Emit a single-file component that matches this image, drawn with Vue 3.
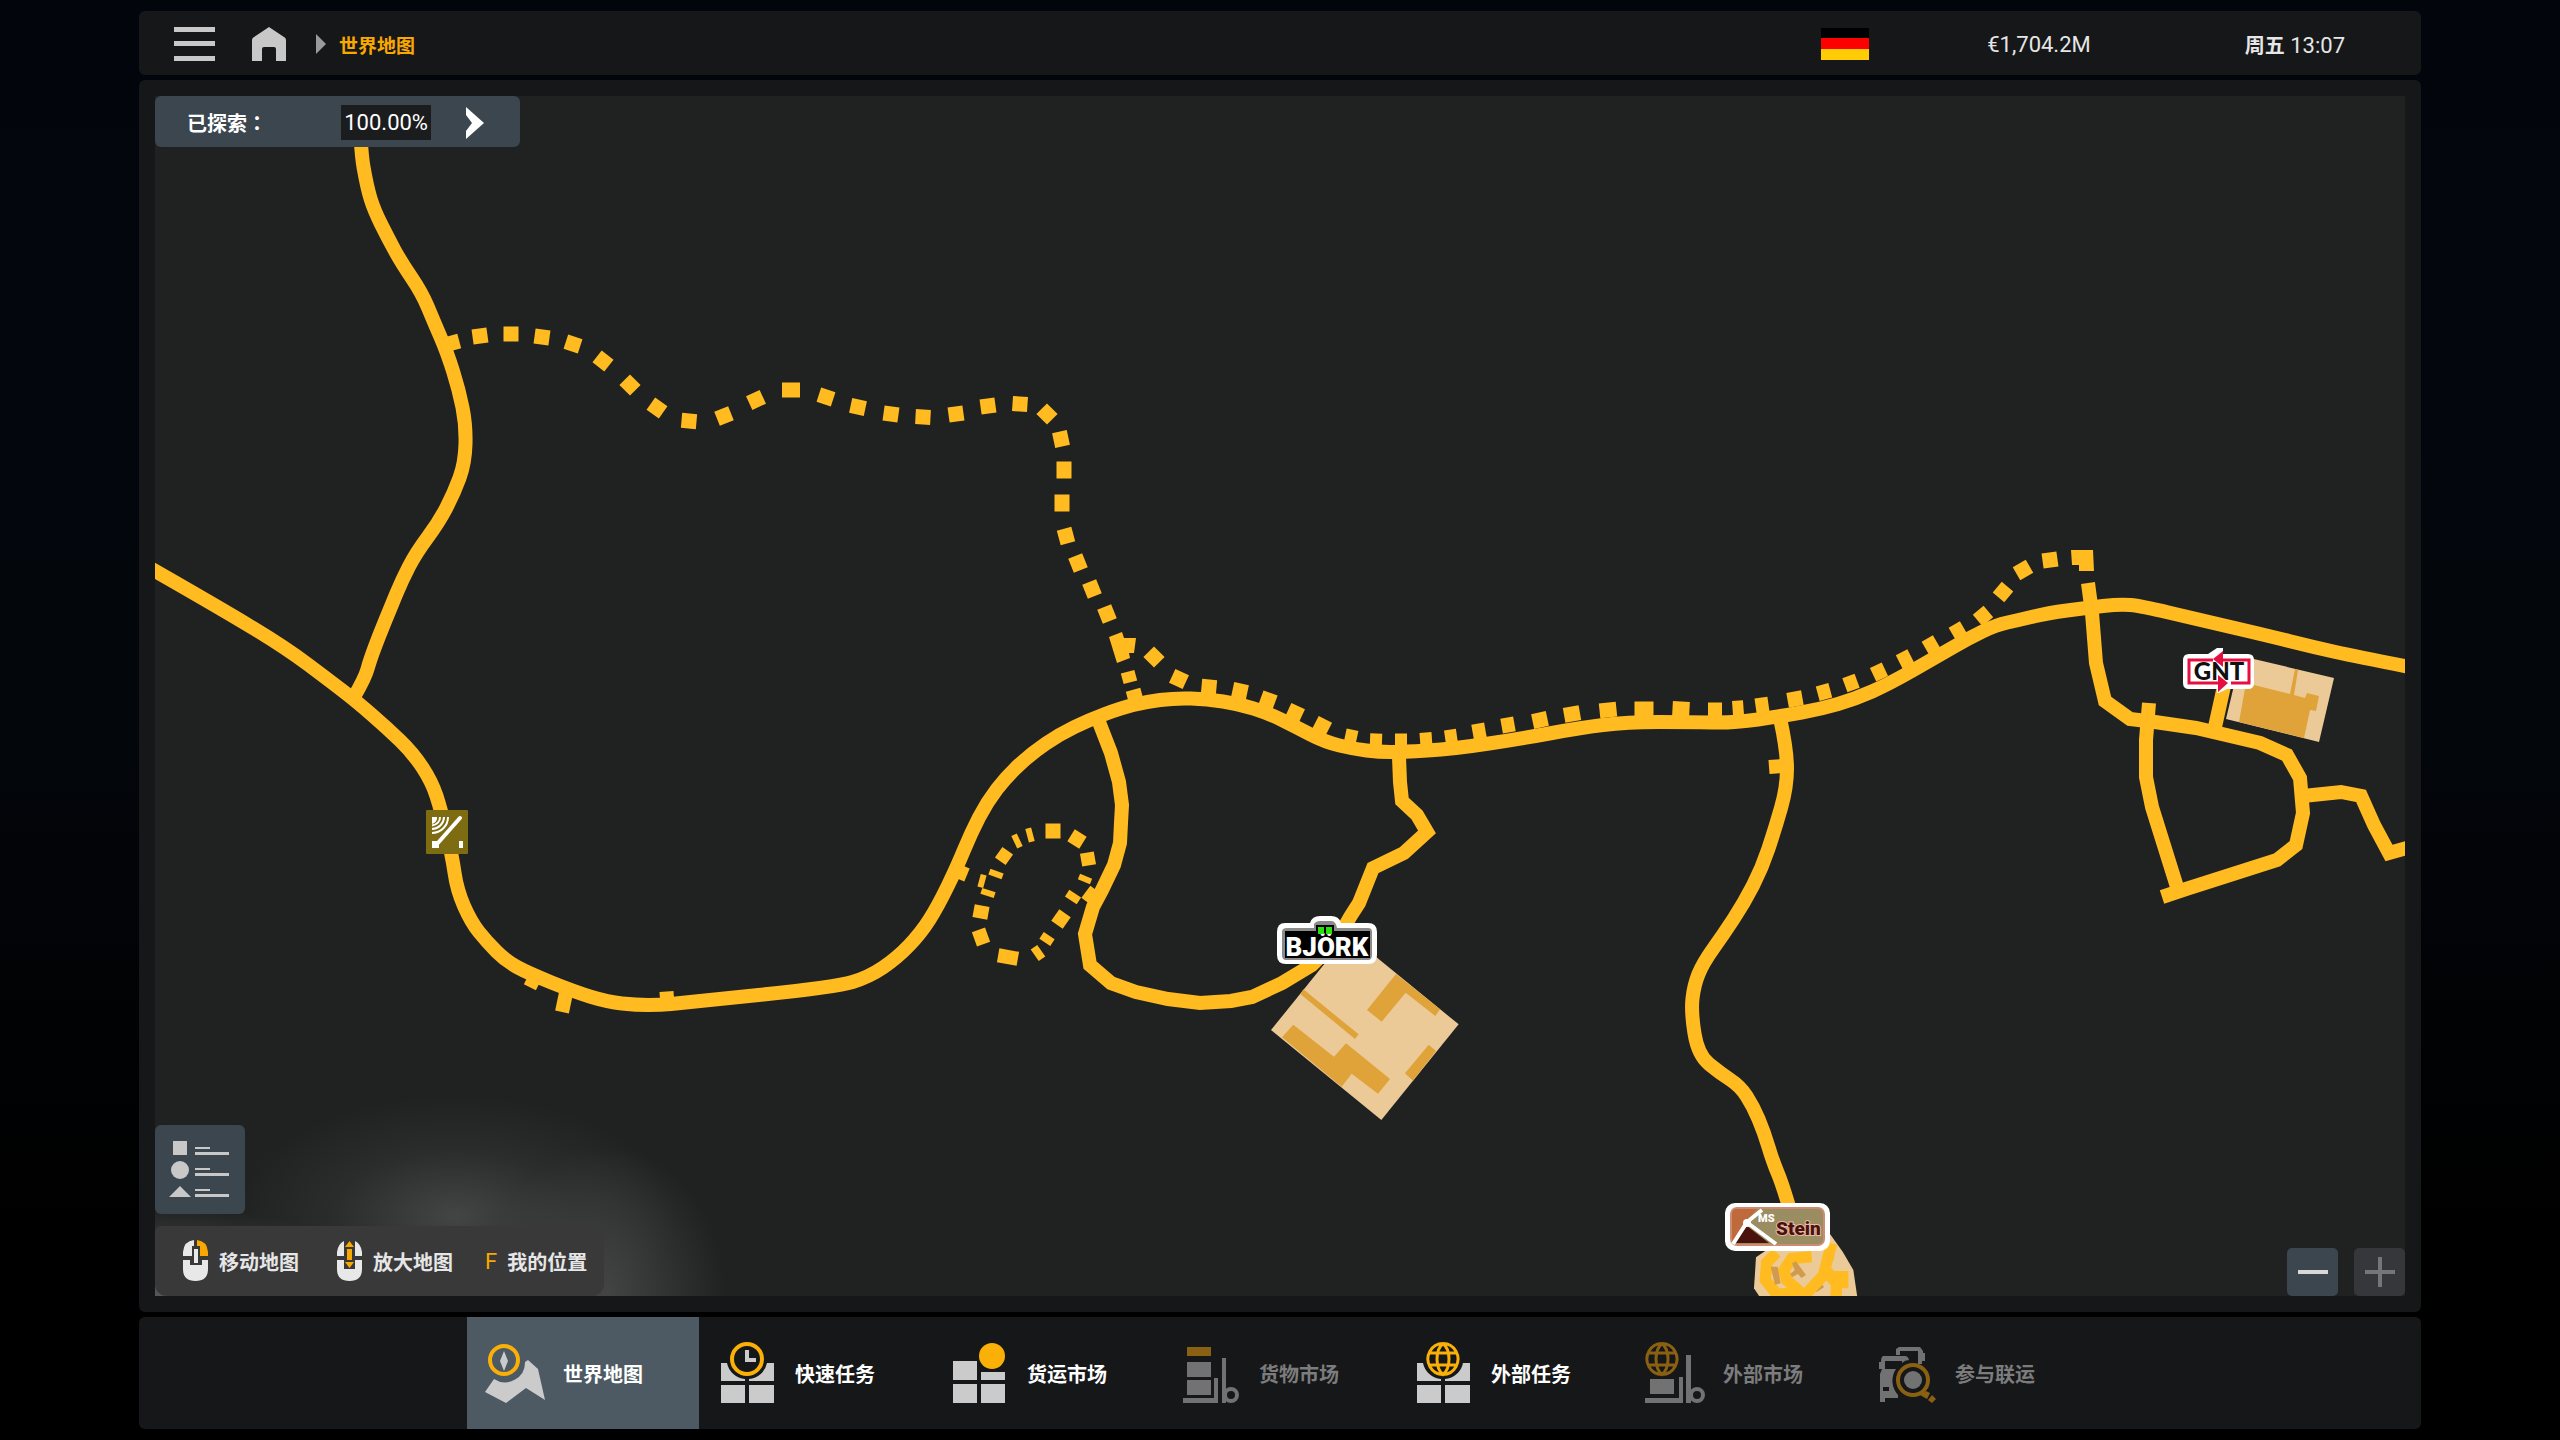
<script setup>
const tabs = [
  { id: 'map', label: '世界地图', active: true },
  { id: 'quick', label: '快速任务' },
  { id: 'freight', label: '货运市场' },
  { id: 'cargo', label: '货物市场', disabled: true },
  { id: 'extjobs', label: '外部任务' },
  { id: 'extmarket', label: '外部市场', disabled: true },
  { id: 'convoy', label: '参与联运', disabled: true },
]

// Rounds a polyline by running quadratic curves between segment midpoints
function smooth(points) {
  const n = points.trim().split(' ').map(Number)
  const p = []
  for (let i = 0; i < n.length; i += 2) p.push([n[i], n[i + 1]])
  let d = `M${p[0][0]} ${p[0][1]}`
  for (let i = 1; i < p.length - 1; i++) {
    const last = i === p.length - 2
    const ex = last ? p[i + 1][0] : (p[i][0] + p[i + 1][0]) / 2
    const ey = last ? p[i + 1][1] : (p[i][1] + p[i + 1][1]) / 2
    d += `Q${p[i][0]} ${p[i][1]} ${ex} ${ey}`
  }
  return d
}

const highways = [
  '359 90 360 147 367 187 374 210 388 238 401 262 422 293 434 322 447 352 459 390 466 425 465 463 454 493 439 522 416 553 402 580 390 609 379 636 370 660 365 678 354 697',
  '150 568 220 608 286 648 330 681 356 701 387 728 413 753 432 782 441 810 452 855 457 890 471 922 487 942 506 961 528 973 575 992 608 1002 636 1005 661 1005 681 1003 836 987 869 977 897 958 921 933 938 906 957 867 971 833 987 802 1007 776 1032 753 1060 734 1089 720 1121 708 1145 702 1175 698 1207 699 1239 704 1268 713 1296 727 1325 742 1354 749 1379 752 1402 752 1453 749 1525 738 1579 728 1627 722 1690 722 1734 723 1782 716 1821 709 1855 699 1889 684 1938 656 1969 638 1996 625 2019 620 2048 613 2086 608 2120 604 2141 606 2196 619 2265 635 2313 647 2358 657 2410 667',
  '1780 718 1787 750 1787 787 1775 829 1762 868 1744 903 1723 935 1703 963 1694 985 1691 1012 1698 1055 1720 1073 1740 1086 1753 1106 1764 1132 1773 1162 1782 1183 1790 1210',
].map(smooth)

const streets = [
  'M1099 722 1111 753 1119 782 1122 805 1121 823 1120 843 1114 865 1102 890 1093 907 1085 934 1090 965 1111 983 1136 992 1168 999 1200 1003 1231 1001 1252 997 1282 983 1312 965 1337 940 1350 917 1359 903 1373 868 1404 853 1427 832 1417 815 1402 801 1400 782 1399 757',
  'M2088 583 2092 613 2096 663 2105 701 2130 719 2155 722 2196 728 2260 743 2287 755 2300 778 2303 813 2296 845 2277 860 2186 889 2162 897',
  'M2149 703 2146 740 2146 777 2152 807 2177 887',
  'M2303 796 2341 792 2361 796 2374 825 2389 853 2410 847',
  'M2215 727 2224 686',
  'M566 993 562 1012',
  'M527 978 539 984',
  'M660 999 674 998',
  'M955 870 967 875',
  'M1087 902 1096 890',
  'M1769 767 1782 766',
]

const roads = [...highways, ...streets]

// Path ties: x, y, rotation, width, height
const ties = [
  [452, 343, -15], [480, 336, -8], [511, 334, 0], [542, 337, 8], [573, 344, 18], [603, 361, 38],
  [630, 385, 45], [657, 408, 35], [689, 421, 5], [724, 416, -22], [756, 400, -25], [791, 390, 0, 18],
  [826, 397, 18], [858, 407, 12], [891, 414, 8], [923, 417, 3], [956, 414, -8], [988, 406, -8],
  [1020, 404, 4], [1047, 414, 45], [1061, 439, -12], [1064, 470, 0, 15, 17], [1062, 503, 0, 15, 17],
  [1066, 536, -15], [1078, 563, -22], [1092, 589, -22], [1107, 614, -22], [1129, 677, -15, 14, 11],
  [1135, 697, -15], [1154, 657, 45], [1179, 679, 25], [1209, 687, 5], [1240, 691, 12], [1268, 700, 20],
  [1295, 713, 25], [1322, 726, 27], [1351, 737, 12, 12], [1376, 741, 2, 12], [1401, 741, 0, 12],
  [1426, 740, -4, 12], [1451, 737, -8, 12], [1479, 731, -10, 13], [1508, 725, -10, 13],
  [1540, 720, -12, 15], [1572, 714, -10, 16], [1608, 710, -6, 17], [1644, 709, 0, 19],
  [1681, 709, 3, 17], [1715, 710, 0, 14], [1738, 708, -4, 11], [1762, 705, -8, 13],
  [1795, 699, -10], [1824, 692, -15, 13], [1851, 683, -20, 13], [1879, 672, -25, 13],
  [1905, 659, -27, 13], [1931, 645, -30, 13], [1958, 631, -30, 13], [1983, 616, -40, 14],
  [2003, 592, -50, 14], [2023, 570, -30, 15], [2050, 560, -8, 15],
  [1053, 831, 0, 15, 15], [1030, 835, -15, 6, 14], [1017, 841, -25, 6, 14], [1004, 856, 35, 13, 13],
  [996, 874, 20, 14, 6], [982, 881, 15, 6, 13], [988, 893, 18, 14, 6], [981, 912, 10, 15, 13],
  [981, 937, -20, 14, 15], [1008, 957, 10, 20, 14], [1038, 953, -35, 8, 14], [1047, 939, 33, 13, 8],
  [1061, 919, 35, 14, 14], [1073, 897, 33, 14, 8], [1085, 879, 22, 13, 6], [1088, 859, -10, 14, 13],
  [1077, 839, 32, 14, 14],
]
</script>

<template>
  <div class="app">
    <header class="topbar panel">
      <button class="icon-btn" aria-label="菜单">
        <svg width="42" height="36" viewBox="0 0 42 36"><path d="M0 1h41v5H0zM0 15h41v5H0zM0 30h41v5H0z" fill="#c8c8c8" /></svg>
      </button>
      <button class="icon-btn home" aria-label="主页">
        <svg width="34" height="36" viewBox="0 0 34 36"><path d="M17 1 32 11Q34 12 34 14V35H24V23Q24 21 22 21H12Q10 21 10 23V35H0V14Q0 12 2 11Z" fill="#c8c8c8" /></svg>
      </button>
      <svg class="crumb-arrow" width="10" height="20" viewBox="0 0 10 20"><path d="M0 0 10 10 0 20Z" fill="#9a9a9a" /></svg>
      <span class="crumb">世界地图</span>
      <div class="status">
        <svg width="48" height="32" viewBox="0 0 48 32" role="img" aria-label="德国">
          <path d="M0 0h48v11H0z" fill="#000" /><path d="M0 10h48v11H0z" fill="#fe0000" /><path d="M0 21h48v11H0z" fill="#ffcc05" />
        </svg>
        <span>€1,704.2M</span>
        <span class="clock"><b>周五</b> 13:07</span>
      </div>
    </header>

    <main class="stage panel">
      <section class="map">
        <svg class="chart" viewBox="155 96 2250 1200" preserveAspectRatio="xMidYMid slice">
          <!-- depot yards -->
          <g transform="translate(1240 880) scale(.33333)">
            <path d="M325 163 656 433 424 720 93 450Z" fill="#ebca98" />
            <path d="M468 282 600 388 586 408 497 338 425 425 381 390ZM190 328 356 463 345 477 181 342ZM160 434 282 530 318 490 450 597 414 641 335 581 305 620 126 472ZM566 494 588 513 519 602 495 580Z" fill="#dfa33a" />
          </g>
          <path d="M2241 656 2334 678 2319 742 2226 719Z" fill="#ebca98" />
          <path d="M2246 683 2290 694 2295 669 2298 670 2294 695 2305 698 2307 693 2319 696 2316 711 2310 710 2304 738 2239 722Z" fill="#dfa33a" />
          <g transform="translate(1660 1160) scale(.33333)">
            <path d="M320 270 510 222 548 275 580 330 592 412 300 412 282 385 288 292Z" fill="#ebca98" />
            <path d="M514 288 522 293 505 328 496 322ZM464 390 488 374 492 382 470 396ZM350 382 376 394 372 400 348 390Z" fill="#d09b4c" />
            <path d="M350 278 320 308 316 360 350 402 440 400 490 346 515 250M455 290 395 296 372 330 380 360 420 395M498 330 530 372 528 412M515 350 548 350V385" fill="none" stroke="#ffbb20" stroke-width="34" />
            <path d="M332 320H353L362 370 345 374ZM396 310 408 304 438 345 424 354 414 342 396 352 391 341 404 331Z" fill="#d09b4c" />
          </g>
          <!-- roads -->
          <g fill="none" stroke="#ffbb20" stroke-width="14" stroke-linejoin="miter">
            <path v-for="(d, i) in roads" :key="i" :d="d" />
          </g>
          <g fill="#ffbb20">
            <rect
              v-for="(t, i) in ties"
              :key="i"
              :width="t[3] || 15"
              :height="t[4] || 15"
              :transform="`translate(${t[0]} ${t[1]}) rotate(${t[2]}) translate(${-(t[3] || 15) / 2} ${-(t[4] || 15) / 2})`"
            />
            <path d="M1109 637 1122 632 1124 638 1136 638 1134 653 1129 653 1130 658 1117 663Z" />
            <path d="M2071 550H2093L2094 571H2079V565H2072Z" />
          </g>
          <!-- toll sign -->
          <g>
            <rect x="426" y="810" width="42" height="44" rx="1" fill="#7d6c12" />
            <g fill="none" stroke="#fff" stroke-width="2">
              <path d="M440 817A9 8 0 0 1 432 825.500M444 817A13 12 0 0 1 432 829M448 817A16 16 0 0 1 432 833" />
              <path d="M460 818 437 844" stroke-width="4" stroke-linecap="round" />
            </g>
            <path d="M432 817h5v2q-1 4-5 5zM432 841h7v7h-7zM459 841h4v7h-4z" fill="#fff" />
          </g>
          <!-- company badges -->
          <g>
            <path d="M2189 654H2208L2217 648 2223 648V654H2248Q2254 654 2254 660V683Q2254 689 2248 689H2227L2219 693H2217V689H2189Q2183 689 2183 683V660Q2183 654 2189 654Z" fill="#fff" />
            <path d="M2213 660H2189V683H2218M2223 660H2249V683H2231" fill="none" stroke="#e5103f" stroke-width="3" />
            <path d="M2213 659 2223 651V667ZM2228 683 2218 675V692Z" fill="#e5103f" />
            <text x="2219" y="680" class="logo-gnt" text-anchor="middle">GNT</text>
          </g>
          <g>
            <path d="M1285 923H1310Q1312 916 1320 916H1331Q1339 916 1341 923H1368Q1377 923 1377 932V955Q1377 964 1368 964H1286Q1277 964 1277 955V932Q1277 923 1285 923Z" fill="#fff" />
            <path d="M1287 928H1314V924Q1316 921 1320 921H1332Q1336 922 1337 928H1368Q1372 928 1372 932V955Q1372 960 1368 960H1286Q1282 960 1282 955V932Q1282 928 1287 928Z" fill="#8b8b8b" />
            <path d="M1285 931H1316V925H1334V931H1370V958H1285Z" fill="#000" />
            <text x="1327" y="956" class="logo-bjork" text-anchor="middle">BJÖRK</text>
            <path d="M1318 927h6v7h-6zM1326 927h6v7h-6z" fill="#2be010" />
          </g>
          <g>
            <rect x="1725" y="1203" width="105" height="48" rx="10" fill="#fff" />
            <rect x="1730" y="1207" width="95" height="39" rx="7" fill="#cf8a72" />
            <rect x="1732" y="1209" width="91" height="35" rx="5" fill="#9b8d62" />
            <path d="M1737 1209H1757L1746 1222 1734 1243Q1732 1242 1732 1239V1214Q1732 1209 1737 1209Z" fill="#bf6a3c" />
            <path d="M1747 1226 1769 1243H1735Z" fill="#4a120c" />
            <path d="M1733 1244 1747 1222 1762 1210M1745 1221 1776 1244" fill="none" stroke="#fff" stroke-width="4" />
            <circle cx="1747" cy="1223" r="4" fill="#fff" />
            <text x="1758" y="1222" class="logo-ms">MS</text>
            <text x="1776" y="1235" class="logo-stein">Stein</text>
          </g>
        </svg>

        <div class="explored">
          <span class="explored-label">已探索：</span>
          <output class="explored-value">100.00%</output>
          <button class="icon-btn" aria-label="展开">
            <svg width="18" height="32" viewBox="0 0 18 32"><path d="M0 0 18 16 0 32V24L6 16 0 8Z" fill="#fff" /></svg>
          </button>
        </div>

        <div class="bottom-left">
          <button class="legend" aria-label="图例">
            <svg width="62" height="58" viewBox="0 0 62 58" fill="#c8c8c8">
              <path d="M4 0h14v14H4zM0 56 11 45 22 56zM26 11h34v3H26zM26 32h34v3H26zM26 53h34v3H26zM26 6h15v2H26zM26 27h15v2H26zM26 48h15v2H26z" />
              <circle cx="11" cy="29" r="9" />
            </svg>
          </button>
          <div class="hints">
            <span class="hint">
              <svg width="26" height="42" viewBox="0 0 26 42">
                <path d="M0 16V12Q1 1 11 0V6H9V16ZM0 20H7V25H19V20H25V29Q25 41 12.500 41T0 29ZM11 9h4v14h-4z" fill="#e8e8e8" />
                <path d="M14 0Q24 1 25 12V16H17V6H14Z" fill="#f9a800" />
              </svg>
              移动地图
            </span>
            <span class="hint">
              <svg width="26" height="42" viewBox="0 0 26 42">
                <path d="M0 16V12Q1 4 7 1V16ZM18 1Q24 4 25 12V16H18ZM0 20H7V29H18V20H25V29Q25 41 12.500 41T0 29Z" fill="#e8e8e8" />
                <path d="M12.500 1 17 7H8ZM12.500 28 17 22H8ZM10 9h5v11h-5z" fill="#f9a800" />
              </svg>
              放大地图
            </span>
            <span class="hint"><kbd>F</kbd>我的位置</span>
          </div>
        </div>

        <div class="zoom">
          <button class="zoom-btn" aria-label="缩小">
            <svg width="30" height="30" viewBox="0 0 30 30"><path d="M0 13h30v4H0z" fill="#d8d8d8" /></svg>
          </button>
          <button class="zoom-btn" aria-label="放大" disabled>
            <svg width="30" height="30" viewBox="0 0 30 30"><path d="M0 13h13V0h4v13h13v4H17v13h-4V17H0z" fill="#757678" /></svg>
          </button>
        </div>
      </section>
    </main>

    <nav class="tabs panel">
      <button v-for="t in tabs" :key="t.id" class="tab" :class="{ active: t.active }" :disabled="t.disabled">
        <svg width="64" height="64" viewBox="0 0 64 64" fill="currentColor">
          <g v-if="t.id === 'map'">
            <path d="M2 51 11 38A20 20 0 0 0 42 21L45 19 55 28 62 59 43 47 23 62Z" />
            <circle cx="21" cy="19" r="14" fill="none" class="ring" stroke-width="4" />
            <path d="M21 10 25 20 21 30 17 20Z" />
          </g>
          <g v-else-if="t.id === 'quick' || t.id === 'extjobs'">
            <path d="M6 22H12A20 20 0 0 0 30 38V40H6ZM34 40V38A20 20 0 0 0 52 22H59V40ZM6 44H30V62H6ZM34 44H59V62H34Z" />
            <template v-if="t.id === 'quick'">
              <circle cx="32" cy="18" r="15" fill="none" class="ring" stroke-width="4" />
              <path d="M30 9h4v8h7v4H30z" />
            </template>
            <path v-else class="ring" fill="none" stroke-width="3" d="M32 2.500A15 15.500 0 1 1 31.900 2.500M32 2.500C24 9 24 27 32 33.500C40 27 40 9 32 2.500M19 12H45M19 24H45" />
          </g>
          <g v-else-if="t.id === 'freight'">
            <path d="M6 20H30V39H6ZM34 31H58V39H34ZM6 43H30V62H6ZM34 43H58V62H34Z" />
            <circle cx="45" cy="15" r="13" class="solid" />
          </g>
          <g v-else-if="t.id === 'cargo'">
            <path d="M8 6H32V15H8Z" class="solid" />
            <path d="M8 21H32V36H8ZM8 39H32V54H8ZM4 57H35V37H39V62H4ZM43 17H47V62H43Z" />
            <circle cx="52" cy="54" r="6" fill="none" stroke="currentColor" stroke-width="4" />
          </g>
          <g v-else-if="t.id === 'extmarket'">
            <path class="ring" fill="none" stroke-width="3" d="M19 2.500A15 15.500 0 1 1 18.900 2.500M19 2.500C11 9 11 27 19 33.500C27 27 27 9 19 2.500M6 12H32M6 24H32" />
            <path d="M7 38H31V53H7ZM2 57H36V36H40V62H2ZM43 14H48V62H43Z" />
            <circle cx="54" cy="54" r="6" fill="none" stroke="currentColor" stroke-width="4" />
          </g>
          <g v-else>
            <path d="M21 8 24 6H45L48 10V12H50V20H47V23H43V10H25V14H21Z" />
            <path d="M8 15H30Q33 15 34 19Q30 19 27 22V20H10V28H21A21 21 0 0 0 23 54V57H10V61H5V33L7 28H4V21H6Q6 16 8 15Z" />
            <path d="M8 46h6v4H8z" fill="#161719" />
            <circle cx="38" cy="39" r="9" />
            <circle cx="38" cy="39" r="15" fill="none" class="ring" stroke-width="4" />
            <path d="M45 54 51 50 55 52 52 58ZM57 54 61 58 57 62 53 59Z" class="solid" />
          </g>
        </svg>
        {{ t.label }}
      </button>
    </nav>
  </div>
</template>

<style>
body {
  margin: 0;
  background: #000;
}
</style>

<style scoped>
.app {
  box-sizing: border-box;
  min-height: 100vh;
  padding: 11px 139px;
  display: flex;
  flex-direction: column;
  gap: 5px;
  background: linear-gradient(#02050c 0%, #03060b 50%, #000 85%);
  color: #e6e6e6;
  font-family: Roboto, "Noto Sans CJK SC", sans-serif;
  font-size: 22px;
}
button {
  border: 0;
  margin: 0;
  padding: 0;
  background: none;
  color: inherit;
  font: inherit;
}
svg {
  display: block;
  flex: none;
}
.panel {
  background: #161719;
  border-radius: 6px;
}
.topbar {
  box-sizing: border-box;
  height: 64px;
  display: flex;
  align-items: center;
  padding: 2px 76px 0 35px;
}
.home {
  margin-left: 36px;
}
.crumb-arrow {
  margin: 0 13px 0 30px;
}
.crumb {
  color: #f9a800;
  font-size: 19px;
  font-weight: 700;
}
.status {
  margin-left: auto;
  display: flex;
  align-items: center;
  gap: 118px;
}
.clock {
  margin-left: 36px;
}
.clock b {
  font-size: 20px;
}
.stage {
  flex: 1;
  display: flex;
  padding: 16px;
}
.map {
  position: relative;
  flex: 1;
  display: flex;
  flex-direction: column;
  align-items: flex-start;
  justify-content: space-between;
  overflow: hidden;
  background:
    radial-gradient(ellipse 120px 150px at 450px 100%, rgba(90, 90, 90, 0.6), rgba(90, 90, 90, 0.3) 50%, transparent),
    radial-gradient(ellipse 220px 120px at 300px calc(100% - 80px), rgba(90, 93, 93, 0.6), rgba(90, 93, 93, 0.18) 55%, transparent),
    radial-gradient(ellipse 240px 90px at 0 100%, rgba(110, 110, 110, 0.7), transparent),
    #202221;
}
.chart {
  position: absolute;
  inset: 0;
  width: 100%;
  height: 100%;
}
.explored {
  position: relative;
  box-sizing: border-box;
  width: 365px;
  height: 51px;
  padding: 2px 36px 0 32px;
  display: flex;
  align-items: center;
  border-radius: 6px;
  background: #3b464f;
  color: #fff;
}
.explored-label {
  font-family: "Noto Sans CJK TC", sans-serif;
  font-size: 20px;
  font-weight: 700;
}
.explored-value {
  margin: 0 35px 0 auto;
  padding: 0 3px;
  line-height: 35px;
  background: #1b1c1e;
}
.bottom-left {
  position: relative;
  display: flex;
  flex-direction: column;
  align-items: flex-start;
  gap: 12px;
}
.legend {
  width: 90px;
  height: 89px;
  display: grid;
  place-items: center;
  border-radius: 6px;
  background: #3b464f;
}
.hints {
  height: 70px;
  padding: 0 17px 0 28px;
  display: flex;
  align-items: center;
  gap: 38px;
  border-radius: 6px 6px 12px 12px;
  background: #393939;
}
.hint {
  display: flex;
  align-items: center;
  gap: 10px;
  font-size: 20px;
  font-weight: 700;
}
.hint:last-child {
  margin-left: -6px;
}
kbd {
  color: #f9a800;
  font-family: Roboto, sans-serif;
  font-size: 22px;
  font-weight: 400;
}
.zoom {
  position: absolute;
  right: 0;
  bottom: 0;
  display: flex;
  gap: 16px;
}
.zoom-btn {
  width: 51px;
  height: 48px;
  display: grid;
  place-items: center;
  border-radius: 5px;
  background: #3b464f;
}
.zoom-btn:disabled {
  background: #35373a;
}
.tabs {
  height: 112px;
  display: flex;
  justify-content: center;
  padding-right: 2px;
}
.tab {
  width: 232px;
  padding: 0 16px;
  display: flex;
  align-items: center;
  gap: 16px;
  color: #fff;
  font-size: 20px;
  font-weight: 700;
}
.tab svg {
  color: #cbcbcb;
}
.tab.active {
  background: #4d5a64;
}
.tab:disabled {
  color: #7c7c7d;
}
.tab:disabled svg {
  color: #727272;
}
.ring {
  stroke: #fab006;
}
.solid {
  fill: #fab006;
}
.tab:disabled .ring {
  stroke: #8a6012;
}
.tab:disabled .solid {
  fill: #8a6012;
}
.logo-gnt {
  font: 900 24px Lato, sans-serif;
  fill: #111;
}
.logo-bjork {
  font: 900 26px Roboto, sans-serif;
  fill: #fff;
}
.logo-ms {
  font: 900 11px Roboto, sans-serif;
  fill: #fff;
}
.logo-stein {
  font: 900 19px Roboto, sans-serif;
  fill: #4a120c;
  stroke: #e8b9a8;
  stroke-width: 2px;
  paint-order: stroke;
}
</style>
